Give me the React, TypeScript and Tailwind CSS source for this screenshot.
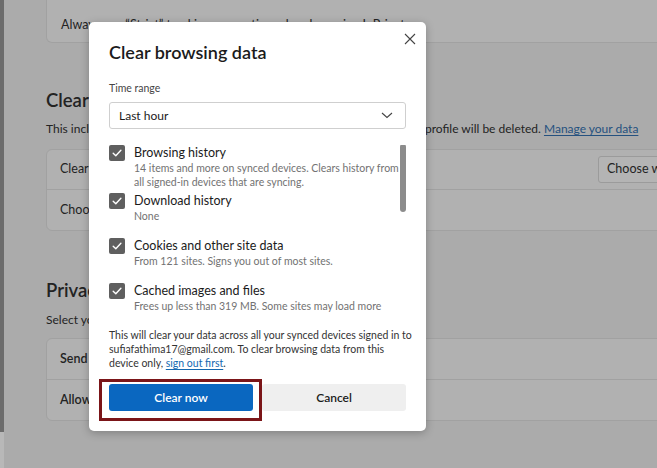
import React from "react";

const font = { fontFamily: 'Lato, "Noto Sans", Arial, sans-serif' };

function Check() {
  return (
    <div className="w-4 h-4 shrink-0 rounded-[2px] bg-[#5f5f5f] flex items-center justify-center">
      <svg width="12" height="12" viewBox="0 0 12 12">
        <path d="M2.2 6.3 L4.8 8.8 L9.9 3.3" fill="none" stroke="#ffffff" strokeWidth="1.4" strokeLinecap="round" strokeLinejoin="round" />
      </svg>
    </div>
  );
}

function Item({ label, desc, cls }: { label: string; desc: string[]; cls: string }) {
  return (
    <div className={"flex shrink-0 gap-[9px] " + cls}>
      <Check />
      <div className="flex flex-col">
        <div className="text-[12.5px] leading-4 text-[#1b1b1b]">{label}</div>
        {desc.map((d, i) => (
          <div key={i} className="text-[10.5px] leading-[14px] text-[#727272] whitespace-nowrap">{d}</div>
        ))}
      </div>
    </div>
  );
}

export default function App() {
  return (
    <div className="relative w-[657px] h-[468px] overflow-hidden bg-[#ababab] flex" style={font}>
      {/* left strip */}
      <div className="w-[4px] shrink-0 flex flex-col">
        <div className="h-[432px] bg-[#6c6c6c]" />
        <div className="flex-1 bg-[#b8b8b8]" />
      </div>
      {/* page */}
      <div className="flex-1 flex flex-col pl-[42px] text-[#232323]">
        <div className="w-[680px] h-[43px] bg-[#b1b1b1] border border-t-0 border-[#a1a1a1] rounded-b-[6px] flex items-end pl-[14px] pb-[9px]">
          <span className="text-[12.5px] leading-4 whitespace-nowrap">Always use “Strict” tracking prevention when browsing InPrivate</span>
        </div>
        <div className="mt-[45px] text-[18.5px] leading-6 font-semibold">Clear browsing data</div>
        <div className="mt-[9px] text-[12px] leading-4 whitespace-nowrap">
          This includes history, passwords, cookies, and more. Only data from this profile will be deleted.{" "}
          <span className="text-[#25517f] underline underline-offset-2">Manage your data</span>
        </div>
        <div className="mt-[12px] w-[680px] h-[82px] bg-[#b1b1b1] border border-[#a1a1a1] rounded-[6px] flex flex-col">
          <div className="h-[40px] border-b border-[#a1a1a1] flex items-center pl-[13px]">
            <span className="text-[12.5px]">Clear browsing data now</span>
            <div className="ml-auto mr-[10px] h-[27px] w-[117px] border border-[#9b9b9b] bg-[#b4b4b4] rounded-[3px] flex items-center pl-[8px] text-[12.5px] whitespace-nowrap overflow-hidden">Choose what to clear</div>
          </div>
          <div className="flex-1 flex items-center pl-[13px]">
            <span className="text-[12.5px]">Choose what to clear every time you close the browser</span>
          </div>
        </div>
        <div className="mt-[47px] text-[18.5px] leading-6 font-semibold">Privacy</div>
        <div className="mt-[10px] text-[12px] leading-4 whitespace-nowrap">Select your privacy settings for Microsoft Edge.</div>
        <div className="mt-[10px] w-[680px] h-[83px] bg-[#b1b1b1] border border-[#a1a1a1] rounded-[6px] flex flex-col">
          <div className="h-[41px] border-b border-[#a1a1a1] flex items-center pl-[13px]">
            <span className="text-[12.5px] font-semibold">Send "Do Not Track" requests</span>
          </div>
          <div className="flex-1 flex items-center pl-[13px]">
            <span className="text-[12.5px] font-semibold">Allow sites to check if you have payment methods saved</span>
          </div>
        </div>
      </div>

      {/* dialog */}
      <div className="absolute left-[89px] top-[22px] w-[337px] h-[409px] bg-white rounded-[5px] shadow-[0_2px_8px_rgba(0,0,0,0.25)] flex flex-col px-[20px]">
        <div className="flex items-start justify-between pt-[18px]">
          <div className="text-[18px] leading-6 font-semibold text-[#1b1b1b]">Clear browsing data</div>
          <svg width="12" height="12" viewBox="0 0 12 12" className="mt-[-7px] mr-[-10px]">
            <path d="M1 1 L11 11 M11 1 L1 11" stroke="#444" strokeWidth="1.1" />
          </svg>
        </div>
        <div className="mt-[16px] text-[10.5px] leading-4 text-[#454545]">Time range</div>
        <div className="mt-[6px] h-[27px] border border-[#cfcfcf] rounded-[3px] flex items-center justify-between pl-[9px] pr-[12px]">
          <span className="text-[12px] text-[#1b1b1b]">Last hour</span>
          <svg width="12" height="7" viewBox="0 0 12 7">
            <path d="M1 1 L6 5.5 L11 1" fill="none" stroke="#444" strokeWidth="1.1" />
          </svg>
        </div>
        <div className="relative mt-[16px] h-[173px] overflow-hidden flex flex-col">
          <Item cls="h-[48px]" label="Browsing history" desc={["14 items and more on synced devices. Clears history from", "all signed-in devices that are syncing."]} />
          <Item cls="h-[45px]" label="Download history" desc={["None"]} />
          <Item cls="h-[45px]" label="Cookies and other site data" desc={["From 121 sites. Signs you out of most sites."]} />
          <Item cls="h-[45px]" label="Cached images and files" desc={["Frees up less than 319 MB. Some sites may load more"]} />
          <div className="absolute right-0 top-[-1px] w-[6px] h-[68px] rounded-full bg-[#8c8c8c]" />
        </div>
        <div className="mt-[10px] flex flex-col text-[10.5px] leading-[14px] text-[#333] whitespace-nowrap">
          <span>This will clear your data across all your synced devices signed in to</span>
          <span>sufiafathima17@gmail.com. To clear browsing data from this</span>
          <span>
            device only, <span className="text-[#1468b0] underline underline-offset-2">sign out first</span>.
          </span>
        </div>
        <div className="mt-[14px] flex gap-[9px]">
          <div className="relative flex-1">
            <div className="h-[27px] rounded-[3px] bg-[#0a67c0] text-white text-[12px] font-semibold flex items-center justify-center">Clear now</div>
            <div className="absolute left-[-10px] top-[-5px] right-[-9px] bottom-[-10px] border-[3px] border-[#7b1518]" />
          </div>
          <div className="flex-1 h-[27px] rounded-[3px] bg-[#efefef] text-[#1b1b1b] text-[12px] font-semibold flex items-center justify-center">Cancel</div>
        </div>
      </div>
    </div>
  );
}
